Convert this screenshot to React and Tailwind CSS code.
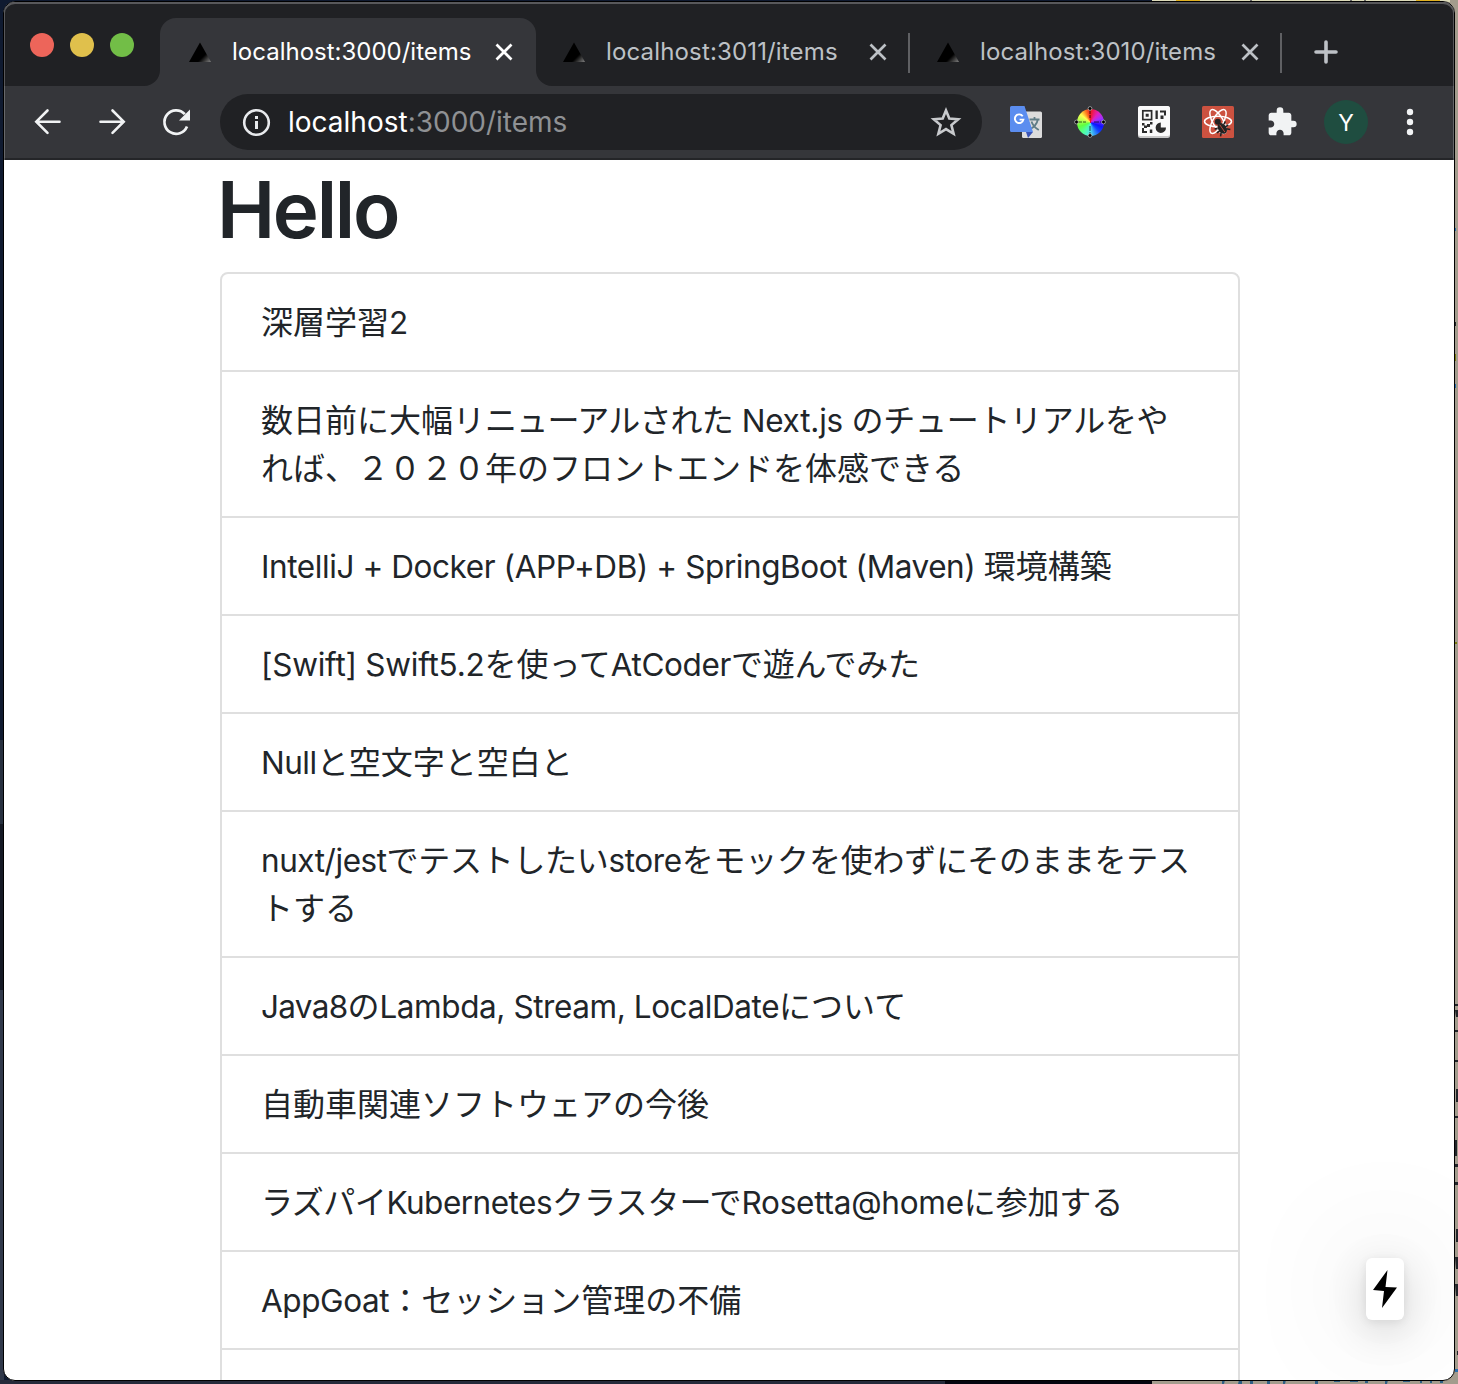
import React from "react";

const L = ({ children, t = "" }) => <span className={"font-['Inter'] text-[31.5px] " + t}>{children}</span>;
const K = ({ children, t = "" }) => <span className={t}>{children}</span>;

const items = [
  [<>深層学習<L>2</L></>],
  [
    <>数日前に大幅リ<K t="tracking-[-0.8px]">ニューアルされた</K><L t="tracking-[-0.22px]"> Next.js </L><K t="tracking-[-0.3px]">のチュートリアルをや</K></>,
    "れば、２０２０年のフロントエンドを体感できる",
  ],
  [<><L t="tracking-[-0.42px]">IntelliJ + Docker (APP+DB) + SpringBoot (Maven) </L>環境構築</>],
  [<><L t="tracking-[-0.25px]">[Swift] Swift5.2</L>を使って<L t="tracking-[-0.4px]">AtCoder</L><K t="tracking-[-0.25px]">で遊んでみた</K></>],
  [<><L t="tracking-[-0.5px]">Null</L>と空文字と空白と</>],
  [
    <><L t="tracking-[-0.45px]">nuxt/jest</L><K t="tracking-[-0.3px]">でテストしたい</K><L t="tracking-[-0.4px]">store</L><K t="tracking-[-0.2px]">をモックを使わずにそのままをテス</K></>,
    "トする",
  ],
  [<><L t="tracking-[-0.7px]">Java8</L>の<L t="tracking-[-0.42px]">Lambda, Stream, LocalDate</L>について</>],
  ["自動車関連ソフトウェアの今後"],
  [<><K t="tracking-[-0.5px]">ラズパイ</K><L t="tracking-[-0.5px]">Kubernetes</L>クラスターで<L t="tracking-[-0.25px]">Rosetta@home</L><K t="tracking-[-0.15px]">に参加する</K></>],
  [<><L t="tracking-[-0.4px]">AppGoat</L>：セッション管理の不備</>],
];

function Favicon() {
  return (
    <svg className="size-[32px] shrink-0" viewBox="0 0 32 32">
      <defs>
        <linearGradient id="fav" x1="0.55" y1="0.55" x2="1" y2="0.95">
          <stop offset="0.3" stopColor="#000" />
          <stop offset="1" stopColor="#777" />
        </linearGradient>
      </defs>
      <path d="M16 6.5 27 26H5z" fill="url(#fav)" />
    </svg>
  );
}

function Close({ c }) {
  return (
    <svg className={"size-[20px] shrink-0 " + c} viewBox="0 0 20 20" fill="none" stroke="currentColor" strokeWidth="2.7">
      <path d="M2.5 2.5 17.5 17.5M17.5 2.5 2.5 17.5" />
    </svg>
  );
}

function Tab({ label, active, className, text = "w-[252px]" }) {
  return (
    <div className={"flex h-[68px] shrink-0 items-center " + className}>
      <Favicon />
      <span className={"ml-[16px] whitespace-nowrap text-[24px] leading-[32px] " + text + (active ? " text-white" : " text-[#bdc1c6]")}>{label}</span>
      <Close c={"ml-[10px] " + (active ? "text-white" : "text-[#bdc1c6]")} />
    </div>
  );
}

function Corner({ flip }) {
  return (
    <svg className={"size-[16px] shrink-0 self-end " + (flip ? "-scale-x-100" : "")} viewBox="0 0 16 16">
      <path d="M16 0V16H0A16 16 0 0 0 16 0Z" fill="#35363a" />
    </svg>
  );
}

function TabStrip() {
  return (
    <div className="flex h-[84px] shrink-0 items-end bg-[#202124]">
      <div className="mb-[29px] ml-[26px] flex gap-[16px] self-end">
        <div className="size-[24px] rounded-full bg-[#ed655a]" />
        <div className="size-[24px] rounded-full bg-[#e0c04c]" />
        <div className="size-[24px] rounded-full bg-[#72be47]" />
      </div>
      <div className="flex w-[26px] justify-end"><Corner /></div>
      <Tab active label="localhost:3000/items" className="w-[376px] rounded-t-[16px] bg-[#35363a] pl-[24px]" />
      <Corner flip />
      <Tab label="localhost:3011/items" text="w-[252px] tracking-[0.15px]" className="w-[356px] pl-[6px]" />
      <div className="mb-[13px] h-[40px] w-[2px] bg-[#5f6063]" />
      <Tab label="localhost:3010/items" text="w-[250px] tracking-[0.1px]" className="w-[370px] pl-[22px]" />
      <div className="mb-[13px] h-[40px] w-[2px] bg-[#5f6063]" />
      <svg className="mb-[22px] ml-[32px] size-[24px]" viewBox="0 0 24 24" stroke="#bdc1c6" strokeWidth="3.6" strokeLinecap="round">
        <path d="M12 2V22M2 12H22" />
      </svg>
    </div>
  );
}

function Translate() {
  return (
    <svg className="size-[32px]" viewBox="0 0 32 32">
      <rect x="12" y="5.5" width="20" height="26.5" rx="1.5" fill="#dcdcdc" />
      <path d="M19.5 13.5H29.5M24.5 11V13.5M27.8 13.5C27 18 23.500 21.500 19.500 23.500M21.500 15.500C22.500 19 25.500 22 28.800 24" stroke="#607d86" strokeWidth="1.8" fill="none" />
      <path d="M16 26H23L18 32Z" fill="#3b54b5" />
      <path d="M1.500 0H14.500L23 26H1.500A1.500 1.500 0 0 1 0 24.500V1.500A1.500 1.500 0 0 1 1.500 0Z" fill="#5b8def" />
      <path d="M12.700 10.200A4.300 4.300 0 1 0 13.400 13.600H9.600" stroke="#fff" strokeWidth="1.900" fill="none" />
    </svg>
  );
}

function Wheel() {
  return (
    <div className="flex size-[32px] items-center justify-center">
      <div className="size-[27px] rounded-full bg-[conic-gradient(#f01820,#e020c0_40deg,#a030ff_70deg,#1010ff_110deg,#1040ff_135deg,#50e0f0_180deg,#50ffa0_215deg,#60ff40_250deg,#b0ff50_280deg,#ffff50_310deg,#ff8020_335deg,#f01820)]">
        <svg className="-m-[2.500px] size-[32px] max-w-none" viewBox="0 0 32 32">
          <path d="M16 3V12M16 20V29M3 16H12M20 16H29" stroke="#000" strokeOpacity="0.65" strokeWidth="1.100" strokeDasharray="5 1" />
          <g fill="#000" stroke="#ddd" strokeWidth="0.600">
            <circle cx="16" cy="2.500" r="1.900" /><circle cx="16" cy="29.500" r="1.900" />
            <circle cx="2.500" cy="16" r="1.900" /><circle cx="29.500" cy="16" r="1.900" />
          </g>
        </svg>
      </div>
    </div>
  );
}

function Qr() {
  return (
    <svg className="size-[32px]" viewBox="0 0 32 32">
      <rect width="32" height="32" rx="2.500" fill="#c8c8c8" />
      <rect width="32" height="30" rx="2.500" fill="#fafafa" />
      <rect x="4.800" y="4.800" width="8.800" height="8.800" fill="none" stroke="#2c2c2c" strokeWidth="1.700" />
      <path d="M7.700 7.700h3v3h-3zM17.500 4.500h2.300v8.500h-2.300zM22 4.500h6v5h-2V6.500h-4zM22.500 9.500h3V13h-3zM4 17h2.500v2.500H4zM9 18h3v3H9zM12 16h2.500v2.500H12zM6 19.500h3v2.500H6zM4 22h2v3h3v2H4zM11.800 23.500h2.500V27h-2.500z" fill="#2c2c2c" />
      <path d="M22.800 16.500A5.200 5.200 0 1 0 28 21.500H22.800Z" fill="#2c2c2c" />
    </svg>
  );
}

function ReactBug() {
  return (
    <svg className="size-[32px]" viewBox="0 0 32 32">
      <rect width="32" height="32" rx="1.500" fill="#cc5240" />
      <g fill="none" stroke="#fff" strokeWidth="1.500">
        <ellipse cx="16" cy="15.500" rx="13.500" ry="5.200" />
        <ellipse cx="16" cy="15.500" rx="13.500" ry="5.200" transform="rotate(60 16 15.500)" />
        <ellipse cx="16" cy="15.500" rx="13.500" ry="5.200" transform="rotate(120 16 15.500)" />
      </g>
      <circle cx="15.800" cy="15.700" r="3" fill="#222" />
      <g transform="rotate(-35 20 22)" fill="#222" stroke="#222" strokeWidth="1.600">
        <ellipse cx="20" cy="22.500" rx="3.300" ry="5" />
        <path d="M13.500 18.500 16 20M13 23H27M14 28 17 25M26.500 18.500 24 20M26 28 23 25" fill="none" />
        <path d="M20 18V27" stroke="#cc5240" strokeWidth="0.800" />
      </g>
    </svg>
  );
}

function Toolbar() {
  return (
    <div className="flex h-[74px] shrink-0 items-center border-b-2 border-[#242528] bg-[#35363a] pl-[28px]">
      <svg className="size-[32px]" viewBox="0 0 32 32" fill="none" stroke="#f1f3f4" strokeWidth="2.600" strokeLinecap="round">
        <path d="M27.500 15.700H4.500M15.500 4.500 4.300 15.700 15.500 26.900" />
      </svg>
      <svg className="ml-[32px] size-[32px]" viewBox="0 0 32 32" fill="none" stroke="#f1f3f4" strokeWidth="2.600" strokeLinecap="round">
        <path d="M4.500 15.700H27.500M16.500 4.500 27.700 15.700 16.500 26.900" />
      </svg>
      <svg className="ml-[32px] size-[32px]" viewBox="0 0 32 32" fill="none" stroke="#f1f3f4" strokeWidth="2.700">
        <path d="M27 20.500A11.700 11.700 0 1 1 24.800 8.200" />
        <path d="M30 3.500V14.500H19Z" fill="#f1f3f4" stroke="none" />
      </svg>
      <div className="ml-[28px] flex h-[56px] w-[762px] items-center rounded-full bg-[#202124] pl-[20px] pr-[20px]">
        <svg className="size-[32px]" viewBox="0 0 32 32">
          <circle cx="16.500" cy="16.500" r="12.300" fill="none" stroke="#e8eaed" strokeWidth="2.600" />
          <path d="M15 10h3v3h-3zM15 15h3v8h-3z" fill="#e8eaed" />
        </svg>
        <span className="ml-[16px] text-[28px] leading-[40px] text-white">localhost<span className="text-[#8f9194]">:3000/items</span></span>
        <svg className="ml-auto size-[32px]" viewBox="0 0 32 32" fill="none" stroke="#c8cacd" strokeWidth="2.600">
          <path d="M16 4.500 19.300 12.600 28.200 13.300 21.400 19.100 23.600 27.800 16 23.100 8.400 27.800 10.600 19.100 3.800 13.300 12.700 12.600Z" />
        </svg>
      </div>
      <div className="ml-[28px] flex items-center gap-[32px]">
        <Translate />
        <Wheel />
        <Qr />
        <ReactBug />
        <svg className="size-[32px]" viewBox="0 0 24 24" fill="#f1f3f4">
          <path d="M20.500 11H19V7c0-1.100-.9-2-2-2h-4V3.500a2.500 2.500 0 0 0-5 0V5H4c-1.100 0-1.990.9-1.990 2v3.800H3.500c1.490 0 2.700 1.210 2.700 2.700s-1.210 2.700-2.700 2.700H2V20c0 1.100.9 2 2 2h3.800v-1.500c0-1.490 1.210-2.700 2.700-2.700s2.700 1.210 2.700 2.700V22H17c1.100 0 2-.9 2-2v-4h1.500a2.500 2.500 0 0 0 0-5z" />
        </svg>
      </div>
      <div className="ml-[26px] flex size-[44px] items-center justify-center rounded-full bg-[#1f4d40] pt-[2px] text-[23px] text-white">Y</div>
      <svg className="ml-[26px] size-[32px]" viewBox="0 0 32 32" fill="#f1f3f4">
        <circle cx="16" cy="6" r="3.200" /><circle cx="16" cy="16" r="3.200" /><circle cx="16" cy="26" r="3.200" />
      </svg>
    </div>
  );
}

function Desktop() {
  return (
    <svg className="absolute inset-0 size-full" viewBox="0 0 1458 1384">
      <rect width="1458" height="1384" fill="#0f1a30" />
      <path d="M0 740H4V824H0z" fill="#27303f" />
      <path d="M0 824H4V990H0z" fill="#141925" />
      <path d="M0 990H4V1384H0z" fill="#30384a" />
      <path d="M0 1380H945V1384H0z" fill="#252a3a" />
      <path d="M945 1380H1152V1384H945z" fill="#04050f" />
      <path d="M1152 0H1458V1384H1152z" fill="#a39c8d" />
      <path d="M1152 0H1450V2H1152z" fill="#dcdab9" />
      <path d="M1176 0h24v2h-24zM1416 0h24v2h-24z" fill="#e0b020" />
      <path d="M1250 0h2v2h-2zM1350 0h2v2h-2zM1364 0h2v2h-2z" fill="#666" />
      <path d="M1225 1380h-3v4h2zM1239 1380h3v4h-4zM1250 1380h3v4h-3zM1267 1380h3v4h-3zM1286 1380h-3v4h2zM1315 1380h3v4h-3zM1334 1380h6v2h-6zM1350 1380h8v2h-8zM1365 1380h3v3h-3zM1388 1380h-3v4h2zM1403 1380h7v2h-7zM1420 1380h2v3h-2zM1430 1380h2v3h-2zM1440 1380h3v3h-3z" fill="#2d5f85" />
      <path d="M1455 228h1v3h-1zM1455 384h1v4h-1zM1455 1369h3v3h-3z" fill="#2a6fae" />
      <path d="M1455 354h1v7h-1zM1455 642h2v2h-2z" fill="#7d7d10" />
      <path d="M1455 322h1v4h-1zM1455 1004h3v2h-3zM1455 1010h3v7h-2zM1455 1030h3v2h-3zM1455 1060h3v2h-3zM1456 1089h2v13h-2zM1455 1116h3v2h-3zM1455 1140h2v16h-2zM1455 1164h3v3h-3zM1455 1182h3v3h-3zM1456 1229h2v13h-2zM1455 1257h3v12h-2zM1455 1284h3v12h-2zM1457 1351h1v4h-1z" fill="#22262b" />
    </svg>
  );
}

export default function App() {
  return (
    <div className="relative h-[1384px] w-[1458px] overflow-hidden bg-[#0f1a30] font-['Inter','Noto_Sans_CJK_JP',sans-serif]">
      <Desktop />
      <div className="absolute left-[3px] top-[1px] flex h-[1380px] w-[1452px] flex-col overflow-hidden rounded-[12px] border border-black bg-white">
        <TabStrip />
        <Toolbar />
        <main className="ml-[216px] w-[1020px] text-[#212529]">
          <h1 className="-ml-[3px] h-[112px] pt-[2px] text-[78px] font-semibold leading-[96px] tracking-[-2.3px]">Hello</h1>
          <ul className="rounded-t-[8px] border-2 border-[#dfdfdf] font-['Noto_Sans_CJK_JP',sans-serif] text-[32px] leading-[48px]">
            {items.map((lines, i) => (
              <li key={i} className="border-b-2 border-[#dfdfdf] px-[39px] pb-[26px] pt-[22px]">
                {lines.map((l, j) => <div key={j} className="h-[48px] whitespace-pre">{l}</div>)}
              </li>
            ))}
            <li className="h-[96px]" />
          </ul>
        </main>
        <div className="absolute bottom-[60px] right-[50px] flex h-[62px] w-[38px] items-center justify-center rounded-[6px] bg-white shadow-[0_11px_40px_0_rgba(0,0,0,0.16),0_2px_10px_0_rgba(0,0,0,0.08),0_0_120px_30px_rgba(0,0,0,0.05)]">
          <svg className="h-[38px] w-[24px]" viewBox="0 0 24 38"><path d="M14.500 0 0 20 11 21 9 38 24 17.500 12.500 17Z" /></svg>
        </div>
        <div className="pointer-events-none absolute inset-x-0 top-0 h-[158px] rounded-t-[11px] border-x border-t-2 border-white/25" />
      </div>
    </div>
  );
}
